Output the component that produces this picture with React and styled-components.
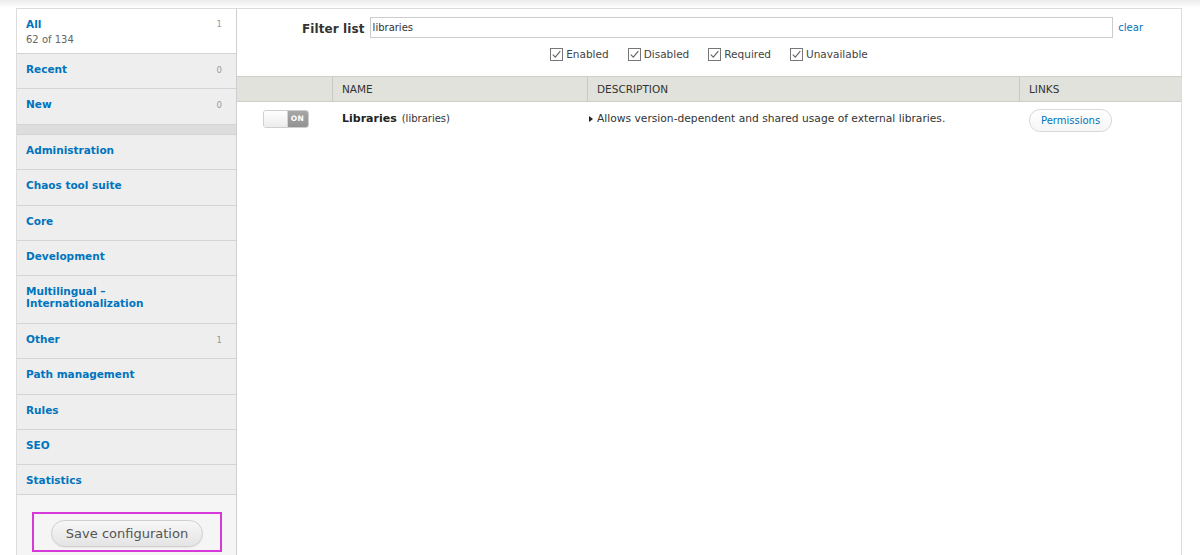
import React from "react";
import styled, { createGlobalStyle } from "styled-components";

const Global = createGlobalStyle`
  html, body { margin: 0; padding: 0; }
  body {
    background: #fff linear-gradient(to bottom, #ececec 0, #ffffff 8px) no-repeat;
    font-family: "DejaVu Sans", Verdana, sans-serif;
    color: #333;
  }
`;

const Frame = styled.div`
  margin: 8px 0 0 16px;
  width: 1166px;
  min-height: 547px;
  box-sizing: border-box;
  border: 1px solid #dcdcdc;
  border-bottom: none;
  display: flex;
`;

const Sidebar = styled.div`
  width: 219px;
  border-right: 1px solid #cfcfcf;
  background: #f5f5f5;
  display: flex;
  flex-direction: column;
`;

const Tab = styled.div`
  background: ${(p) => (p.$active ? "#fff" : "#eeeeee")};
  border-bottom: 1px solid #d4d4d4;
  padding: ${(p) =>
    p.$active ? "9px 10px 7px 9px" : p.$last ? "9px 10px 8px 9px" : "9px 10px 13.4px 9px"};
  display: flex;
  justify-content: space-between;
  align-items: flex-start;
`;

const TabText = styled.div`
  display: flex;
  flex-direction: column;
`;

const TabLabel = styled.span`
  color: #0074bd;
  font-weight: bold;
  font-size: 10.5px;
  line-height: 12px;
`;

const TabSub = styled.span`
  color: #666;
  font-size: 10px;
  line-height: 13px;
  margin-top: 3px;
`;

const Count = styled.span`
  color: #999;
  font-size: 8.5px;
  line-height: 12px;
  height: 12px;
  padding-top: ${(p) => (p.$top ? "0" : "1px")};
  box-sizing: border-box;
  margin-right: 4px;
`;

const Separator = styled.div`
  height: 9px;
  background: #dddddd;
  border-bottom: 1px solid #d4d4d4;
`;

const SaveArea = styled.div`
  padding: 17px 14px 0 15px;
`;

const Highlight = styled.div`
  border: 2px solid #d63ad6;
  padding: 6px 17px 3px;
  height: 27px;
`;

const SaveButton = styled.button`
  width: 152px;
  height: 27px;
  border: 1px solid #cfcfcf;
  border-radius: 14px;
  background: linear-gradient(to bottom, #f7f7f7, #e4e4e4);
  font-family: "DejaVu Sans", Verdana, sans-serif;
  font-size: 13px;
  color: #555;
  padding: 0;
  box-shadow: 0 1px 1px rgba(0,0,0,0.05);
`;

const Main = styled.div`
  flex: 1;
  background: #fff;
  display: flex;
  flex-direction: column;
`;

const FilterRow = styled.div`
  display: flex;
  align-items: center;
  padding: 8px 38px 0 65px;
  gap: 5px;
`;

const FilterLabel = styled.label`
  font-weight: bold;
  font-size: 12px;
  color: #333;
  letter-spacing: 0.1px;
  padding-top: 2px;
`;

const FilterInput = styled.div`
  flex: 1;
  height: 19px;
  border: 1px solid #cccccc;
  display: flex;
  align-items: center;
  padding-left: 2px;
  font-size: 10px;
  color: #333;
`;

const ClearLink = styled.a`
  font-size: 10px;
  color: #0074bd;
`;

const ChecksRow = styled.div`
  display: flex;
  justify-content: center;
  gap: 19px;
  margin-top: 9px;
  height: 14px;
`;

const Check = styled.label`
  display: flex;
  align-items: center;
  gap: 3px;
  font-size: 10.5px;
  color: #444;
`;

const Table = styled.div`
  margin-top: 15px;
  display: flex;
  flex-direction: column;
`;

const HeadRow = styled.div`
  display: grid;
  grid-template-columns: 95px 255px 432px 162px;
  background: #e1e2dc;
  border-top: 1px solid #cfcfc9;
  border-bottom: 1px solid #cfcfc9;
  height: 24px;
`;

const HeadCell = styled.div`
  border-left: ${(p) => (p.$first ? "none" : "1px solid #c9c9c3")};
  padding-left: 9px;
  display: flex;
  align-items: center;
  font-size: 10.5px;
  color: #333;
  text-transform: uppercase;
`;

const BodyRow = styled.div`
  display: grid;
  grid-template-columns: 95px 255px 432px 162px;
  align-items: start;
  padding: 7px 0;
`;

const Cell = styled.div`
  display: flex;
  align-items: center;
  justify-content: ${(p) => (p.$center ? "center" : "flex-start")};
  padding-left: ${(p) => p.$pad || "10px"};
  padding-top: ${(p) => p.$top || "0"};
  font-size: ${(p) => p.$size || "10px"};
  line-height: 14px;
  color: #333;
`;

const Toggle = styled.div`
  width: 44px;
  height: 16px;
  border: 1px solid #cfcfcf;
  border-radius: 3px;
  display: flex;
  overflow: hidden;
  margin-left: 2px;
`;

const ToggleKnob = styled.div`
  width: 23px;
  background: linear-gradient(to bottom, #ffffff, #ececec);
  border-right: 1px solid #d4d4d4;
`;

const ToggleOn = styled.div`
  flex: 1;
  background: linear-gradient(to bottom, #a6a6a6, #939393);
  color: #fff;
  font-weight: bold;
  font-size: 7.5px;
  display: flex;
  align-items: center;
  justify-content: center;
  letter-spacing: 0.5px;
`;

const ModName = styled.span`
  font-weight: bold;
  font-size: 11px;
  color: #222;
  margin-right: 5px;
`;

const MachineName = styled.span`
  font-size: 10px;
  color: #333;
`;

const Triangle = styled.span`
  width: 0;
  height: 0;
  border-top: 3px solid transparent;
  border-bottom: 3px solid transparent;
  border-left: 4px solid #222;
  margin-right: 4px;
`;

const PillLink = styled.a`
  height: 21px;
  padding: 0 11px;
  border: 1px solid #d9d9d9;
  border-radius: 11px;
  display: flex;
  align-items: center;
  font-size: 10px;
  color: #0074bd;
  background: linear-gradient(to bottom, #ffffff, #f6f6f6);
`;

const CheckIcon = () => (
  <svg width="13" height="13" viewBox="0 0 13 13">
    <rect x="0.5" y="0.5" width="12" height="12" fill="#fff" stroke="#777" />
    <path d="M2.8 6.6 L5.3 9.2 L10.3 3.2" fill="none" stroke="#666" strokeWidth="1.2" />
  </svg>
);

const tabs = [
  { label: "Administration" },
  { label: "Chaos tool suite" },
  { label: "Core" },
  { label: "Development" },
  { label: "Multilingual", multi: true },
  { label: "Other", count: "1" },
  { label: "Path management" },
  { label: "Rules" },
  { label: "SEO" },
  { label: "Statistics", last: true },
];

export default function App() {
  return (
    <>
      <Global />
      <Frame>
        <Sidebar>
          <Tab $active>
            <TabText>
              <TabLabel>All</TabLabel>
              <TabSub>62 of 134</TabSub>
            </TabText>
            <Count $top>1</Count>
          </Tab>
          <Tab>
            <TabLabel>Recent</TabLabel>
            <Count>0</Count>
          </Tab>
          <Tab>
            <TabLabel>New</TabLabel>
            <Count>0</Count>
          </Tab>
          <Separator />
          {tabs.map((t) => (
            <Tab key={t.label} $last={t.last}>
              <TabLabel>
                {t.multi ? (
                  <>
                    Multilingual –<br />
                    Internationalization
                  </>
                ) : (
                  t.label
                )}
              </TabLabel>
              {t.count && <Count>{t.count}</Count>}
            </Tab>
          ))}
          <SaveArea>
            <Highlight>
              <SaveButton>Save configuration</SaveButton>
            </Highlight>
          </SaveArea>
        </Sidebar>
        <Main>
          <FilterRow>
            <FilterLabel>Filter list</FilterLabel>
            <FilterInput>libraries</FilterInput>
            <ClearLink>clear</ClearLink>
          </FilterRow>
          <ChecksRow>
            {["Enabled", "Disabled", "Required", "Unavailable"].map((c) => (
              <Check key={c}>
                <CheckIcon />
                {c}
              </Check>
            ))}
          </ChecksRow>
          <Table>
            <HeadRow>
              <HeadCell $first />
              <HeadCell>Name</HeadCell>
              <HeadCell>Description</HeadCell>
              <HeadCell>Links</HeadCell>
            </HeadRow>
            <BodyRow>
              <Cell $center $pad="0" $top="1px">
                <Toggle>
                  <ToggleKnob />
                  <ToggleOn>ON</ToggleOn>
                </Toggle>
              </Cell>
              <Cell $top="3px">
                <ModName>Libraries</ModName>
                <MachineName>(libraries)</MachineName>
              </Cell>
              <Cell $pad="2px" $top="3px" $size="10.7px">
                <Triangle />
                Allows version-dependent and shared usage of external libraries.
              </Cell>
              <Cell>
                <PillLink>Permissions</PillLink>
              </Cell>
            </BodyRow>
          </Table>
        </Main>
      </Frame>
    </>
  );
}
